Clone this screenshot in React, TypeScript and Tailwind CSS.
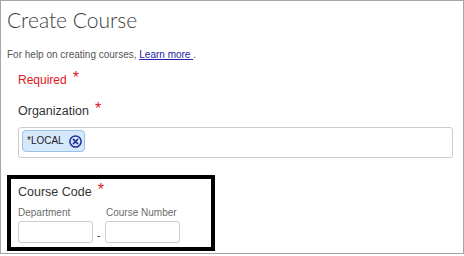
function Label({ text, className }: { text: string; className: string }) {
  return (
    <div className={`flex items-start ${className}`}>
      <span>{text}</span>
      <span className="ml-[6px] text-[16px] leading-[10px] text-[#e0161b]">*</span>
    </div>
  );
}

function CloseIcon() {
  return (
    <svg width="13" height="13" viewBox="0 0 13 13" className="shrink-0">
      <circle cx="6.5" cy="6.5" r="5.6" fill="none" stroke="#1f2f9a" strokeWidth="1.5" />
      <path d="M4.4 4.4 L8.6 8.6 M8.6 4.4 L4.4 8.6" stroke="#1f2f9a" strokeWidth="1.6" strokeLinecap="round" />
    </svg>
  );
}

export default function App(): JSX.Element {
  return (
    <div className="font-['Liberation_Sans'] w-[464px] h-[254px] border border-[#a6a6a6] bg-white overflow-hidden">
      <h1 className="font-['Lato'] ml-[6px] mt-[7px] text-[21px] leading-[24px] font-light text-[#3c3c3c]">
        Create Course
      </h1>

      <p className="ml-[6px] mt-[17px] text-[10px] leading-[12px] text-[#555555]">
        For help on creating courses,{' '}
        <a href="#" className="text-[#2222a6] underline">
          Learn more{' '}
        </a>
        .
      </p>

      <Label text="Required" className="ml-[17px] mt-[12px] text-[12px] leading-[14px] text-[#e0161b]" />

      <Label text="Organization" className="ml-[17px] mt-[17px] text-[12.5px] leading-[15px] text-[#333333]" />

      <div className="ml-[17px] mt-[8px] w-[435px] h-[31px] border border-[#cccccc] rounded-[3px] pl-[3px] pt-[2px] flex items-start">
        <span className="flex items-center h-[22px] pl-[4px] pr-[2px] gap-[5px] bg-[#d6e8fb] border border-[#9cc1e8] rounded-[4px] text-[10px] leading-[12px] text-[#222222]">
          *LOCAL
          <CloseIcon />
        </span>
      </div>

      <div className="ml-[6px] mt-[17px] w-[208px] h-[76px] border-4 border-black pl-[7px] pt-[6px]">
        <Label text="Course Code" className="text-[12.5px] leading-[15px] text-[#333333]" />
        <div className="mt-[7px] flex items-end">
          <div className="flex flex-col">
            <label className="text-[10px] leading-[12px] text-[#6b6b6b]">Department</label>
            <input className="mt-[2px] w-[75px] h-[22px] border border-[#cccccc] rounded-[3px] outline-none" />
          </div>
          <span className="w-[12px] pl-[4px] text-[10px] leading-[12px] text-[#333333] pb-[1px]">-</span>
          <div className="flex flex-col">
            <label className="ml-[1px] text-[10px] leading-[12px] text-[#6b6b6b]">Course Number</label>
            <input className="mt-[2px] w-[75px] h-[22px] border border-[#cccccc] rounded-[3px] outline-none" />
          </div>
        </div>
      </div>
    </div>
  );
}
